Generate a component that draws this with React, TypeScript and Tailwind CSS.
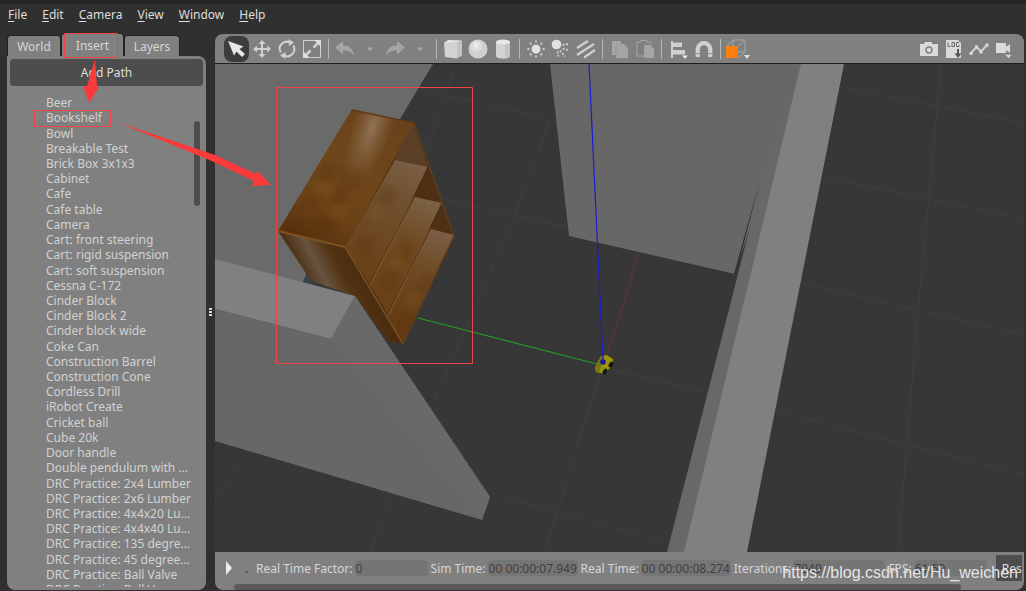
import React, { type ReactNode } from "react";

const MENUS = ["File", "Edit", "Camera", "View", "Window", "Help"];

const MODELS = [
  "Beer", "Bookshelf", "Bowl", "Breakable Test", "Brick Box 3x1x3", "Cabinet", "Cafe", "Cafe table",
  "Camera", "Cart: front steering", "Cart: rigid suspension", "Cart: soft suspension", "Cessna C-172",
  "Cinder Block", "Cinder Block 2", "Cinder block wide", "Coke Can", "Construction Barrel",
  "Construction Cone", "Cordless Drill", "iRobot Create", "Cricket ball", "Cube 20k", "Door handle",
  "Double pendulum with …", "DRC Practice: 2x4 Lumber", "DRC Practice: 2x6 Lumber",
  "DRC Practice: 4x4x20 Lu…", "DRC Practice: 4x4x40 Lu…", "DRC Practice: 135 degre…",
  "DRC Practice: 45 degree…", "DRC Practice: Ball Valve",
];

function Tool({ label, active, children }: { label: string; active?: boolean; children: ReactNode }) {
  return (
    <button
      type="button"
      aria-label={label}
      className={`flex h-[26px] w-[25px] shrink-0 items-center justify-center rounded-lg ${active ? "bg-[#3c3c3c]" : ""}`}
    >
      <svg viewBox="0 0 24 24" className="size-6 shrink-0" fill="none" stroke="#d0d0d0" strokeWidth="2">
        {children}
      </svg>
    </button>
  );
}

function Sep({ wide }: { wide?: boolean }) {
  return (
    <span className={`flex shrink-0 justify-center ${wide ? "w-[9px]" : "w-2"}`}>
      <span className="h-5 w-px bg-[#b8b8b8]" />
    </span>
  );
}

const SUN_RAYS = [0, 45, 90, 135, 180, 225, 270, 315];

function Toolbar() {
  return (
    <div className="flex h-[30px] shrink-0 items-center overflow-hidden border-b border-[#1e1e1e] bg-[#808080] pr-2 pl-[9px]">
      <Tool label="Selection mode" active>
        <path d="M3 4 L18.500 9.500 L14.500 12 L20 17 L17 20 L11.500 14.500 L9 18.500 Z" fill="#e6e6e6" stroke="none" />
      </Tool>
      <Tool label="Translation mode">
        <path d="M12 6V18M6 12H18" />
        <path d="M12 3l3.500 4h-7zM12 21l3.500-4h-7zM3 12l4-3.500v7zM21 12l-4-3.500v7z" fill="#d0d0d0" stroke="none" />
      </Tool>
      <Tool label="Rotation mode">
        <path d="M5.800 15.500A7 7 0 0 1 15 5.600M18.200 8.500A7 7 0 0 1 9 18.400" />
        <path d="M13.500 2l5.500 3.500-5 3.500zM10.500 15l-5.500 3.500 5.500 3.500z" fill="#d0d0d0" stroke="none" />
      </Tool>
      <Tool label="Scale mode">
        <path d="M3.500 3.500H20.500V20.500H3.500Z" strokeWidth="1" />
        <path d="M6 18L10.500 13.500M13.500 10.500L18 6" strokeWidth="2.500" />
        <path d="M21 3v7l-7-7zM3 21v-7l7 7z" fill="#dedede" stroke="none" />
      </Tool>
      <Sep />
      <Tool label="Undo">
        <path d="M2 10.500L10 4v4.500c6 0 10 3 11 10-3-4-6-5-11-5v4z" fill="#a5a5a5" stroke="none" />
      </Tool>
      <Tool label="Undo history">
        <path d="M9 10.500h6l-3 4z" fill="#a5a5a5" stroke="none" />
      </Tool>
      <Tool label="Redo">
        <path d="M22 10.500L14 4v4.500c-6 0-10 3-11 10 3-4 6-5 11-5v4z" fill="#a5a5a5" stroke="none" />
      </Tool>
      <Tool label="Redo history">
        <path d="M9 10.500h6l-3 4z" fill="#a5a5a5" stroke="none" />
      </Tool>
      <Sep />
      <Tool label="Box">
        <path d="M3 6l13-.5v16L4 20z" fill="#d2d2d2" stroke="none" />
        <path d="M3 6l4-3 14 .5-5 2z" fill="#e8e8e8" stroke="none" />
        <path d="M16 5.500l5-2v15l-5 3z" fill="#c2c2c2" stroke="none" />
      </Tool>
      <Tool label="Sphere">
        <circle cx="12" cy="12" r="9.500" fill="#cfcfcf" stroke="none" />
        <circle cx="10.500" cy="9" r="5.500" fill="#dedede" stroke="none" />
        <circle cx="10" cy="8" r="2.500" fill="#ececec" stroke="none" />
      </Tool>
      <Tool label="Cylinder">
        <path d="M5 5v14c0 3.500 14 3.500 14 0V5z" fill="#d4d4d4" stroke="none" />
        <path d="M14 5v16.500c3-.3 5-1.200 5-2.500V5z" fill="#c4c4c4" stroke="none" />
        <ellipse cx="12" cy="5" rx="7" ry="2.500" fill="#e8e8e8" stroke="none" />
      </Tool>
      <Sep />
      <Tool label="Point light">
        <circle cx="12" cy="12" r="4.500" fill="#e0e0e0" stroke="none" />
        {SUN_RAYS.map((a) => (
          <path key={a} d="M12 3.400v2" transform={`rotate(${a} 12 12)`} strokeWidth="1.800" />
        ))}
      </Tool>
      <Tool label="Spot light">
        <circle cx="7.500" cy="7.500" r="4.800" fill="#e0e0e0" stroke="none" />
        <path d="M13.500 8l7-1M13.500 11.500l7 2M11 13.500l5 6M8.500 14.500l1 5" strokeWidth="1.800" strokeDasharray="2 1.500" />
      </Tool>
      <Tool label="Directional light">
        <path d="M3 11L14 4M3 18L20 7M10 20.500L21 13" strokeWidth="2.200" />
      </Tool>
      <Sep wide />
      <Tool label="Copy">
        <path d="M4 4h9v3h3l4 4v10H8v-3H4z" fill="#a5a5a5" stroke="none" />
        <path d="M8 8v9" stroke="#949494" strokeWidth="1" />
      </Tool>
      <Tool label="Paste">
        <path d="M4 5h4V3.500h6V5h4v14H4z" stroke="#a5a5a5" strokeWidth="1" />
        <path d="M11 8h6l4 4v9H11z" fill="#a5a5a5" stroke="none" />
      </Tool>
      <Sep wide />
      <Tool label="Align">
        <path d="M5 4v17" />
        <path d="M6 5.500h9v4.500H6zM6 13h12v4.500H6z" fill="#d0d0d0" stroke="none" />
        <path d="M15 18.500h6l-3 3.500z" fill="#e6e6e6" stroke="none" />
      </Tool>
      <Tool label="Snap">
        <path d="M5.700 20v-7.500a6.300 6.300 0 0 1 12.600 0V20" strokeWidth="4.200" />
        <path d="M3.500 16.500h4.500M16 16.500h4.500" stroke="#909090" strokeWidth="1" />
      </Tool>
      <Sep wide />
      <button type="button" aria-label="View angle" className="flex h-[26px] w-[25px] shrink-0 items-center justify-center">
        <svg viewBox="1 0 26 24" className="h-6 w-[26px] shrink-0" fill="none">
          <path d="M3 9L9 3h12v12l-6 6M15 9l6-6M9 3v6M9 15h12" stroke="#a5abb0" strokeWidth="1" />
          <path d="M2 9h12v12H2z" fill="#ff7f0e" />
          <path d="M20 18h6l-3 4z" fill="#dedede" />
        </svg>
      </button>
      <div className="flex-1" />
      <Tool label="Screenshot">
        <path d="M3 7h4l1-2h7v2h6v12H3z" fill="#dadada" stroke="none" />
        <circle cx="12" cy="13" r="3" stroke="#808080" strokeWidth="1.500" />
      </Tool>
      <Tool label="Log data">
        <path d="M4 3h12l3 3v15H4z" fill="#dadada" stroke="none" />
        <path d="M6 5.500v4h2.500M10 5.500h2.500v4H10zM17 5.500h-2.500v4H17v-2" stroke="#6a6a6a" strokeWidth="1" />
        <path d="M16 12v6" stroke="#555" strokeWidth="2" />
        <path d="M12.500 16.500h7L16 21z" fill="#555" stroke="none" />
      </Tool>
      <Tool label="Plot">
        <path d="M4 16l5.500-6 4.500 4.500L20 8" />
        <path d="M2.500 15h3v3h-3zM8 8.500h3v3H8zM12.500 13.500h3v3h-3zM18.500 6.500h3v3h-3z" fill="#dadada" stroke="none" />
      </Tool>
      <Tool label="Record video">
        <path d="M4 6h10v4L18 7v9l-4-3V16H4z" fill="#dadada" stroke="none" />
        <path d="M13 17.500h7l-3.500 4z" fill="#dadada" stroke="#808080" strokeWidth=".5" />
      </Tool>
    </div>
  );
}

function Bookshelf() {
  return (
    <g>
      <path d="M307 272L303 282L314 285Z" fill="#36444c" />
      <path d="M345 247L413 123L454 236L403 344Z" fill="#4e3115" />
      <path d="M413 123L428 167L395 160L399 148Z" fill="#5a3f26" />
      <path d="M395 160L428 167L371 286L345 247Z" fill="url(#plankA)" />
      <path d="M415 197L442 203L389 316L370 285Z" fill="url(#plankB)" />
      <path d="M431 229L454 235L403 344L388 316Z" fill="url(#plankC)" />
      <path d="M352 109L414 123L345 247L278 231Z" fill="url(#woodSide)" />
      <path d="M352 109L414 123L345 247L278 231Z" fill="url(#shine)" />
      <path d="M278 231L345 247L403 344L388 341L355 296L311 281Z" fill="url(#woodTop)" />
      <g filter="url(#soften)">
        <g fill="#4a2404" opacity=".2">
          <path d="M322 163l18 4-8 15-18-4zM349 167l17 4-8 15-17-4zM309 191l15 3-9 16-12-3zM337 186l13 3-9 17-13-3zM319 213l22 5-9 18-20-5zM290 222l18 4-4 8-18-4z" />
          <path d="M384 186l13 5-9 17-13-5zM362 235l12 5-6 15-10-4zM404 242l11 4-8 17-12-5zM390 268l12 5-9 17-13-5zM424 275l9 4-8 16-10-4zM404 309l11 4-8 16-9-4z" />
        </g>
        <g fill="#b07830" opacity=".09">
          <path d="M318 180l18 4-9 15-17-3zM333 203l17 4-9 14-16-3zM375 203l12 5-9 16-12-5zM399 250l9 4-9 16-10-5zM411 290l10 5-8 13-9-4z" />
        </g>
      </g>
      <path d="M415 197L370 285M431 229L388 316" stroke="#8a6a48" strokeWidth="1" opacity=".7" />
      <path d="M428 167L413 198M442 203L429 230" stroke="#4a2d12" strokeWidth="1" />
      <path d="M414 198L369 284M430 230L387 315" stroke="#53320f" strokeWidth="1" opacity=".8" />
      <path d="M345 247L403 344" stroke="#775026" strokeWidth="1.500" />
      <path d="M278 231L345 247" stroke="#805222" strokeWidth="2" fill="none" />
      <path d="M345 247L413 123" stroke="#6e4216" strokeWidth="1" fill="none" />
      <path d="M352 110L414 123L454 236L403 344" stroke="#5e3d1c" strokeWidth="1.500" fill="none" />
    </g>
  );
}

function Scene() {
  return (
    <svg
      viewBox="215 64 809 488"
      preserveAspectRatio="xMidYMid slice"
      className="min-h-0 w-full flex-1 bg-[#373737]"
      role="img"
      aria-label="Simulation view"
    >
      <defs>
        <filter id="soften"><feGaussianBlur stdDeviation="2.500" /></filter>
        <linearGradient id="woodSide" gradientUnits="userSpaceOnUse" x1="383" y1="114" x2="312" y2="242">
          <stop offset="0" stopColor="#6a431c" />
          <stop offset=".4" stopColor="#6e461a" />
          <stop offset=".75" stopColor="#6c4317" />
          <stop offset="1" stopColor="#5a320d" />
        </linearGradient>
        <radialGradient id="shine" gradientUnits="userSpaceOnUse" cx="0" cy="0" r="1" gradientTransform="translate(372 128) rotate(110) scale(60 20)">
          <stop offset="0" stopColor="#a8927c" stopOpacity=".6" />
          <stop offset=".5" stopColor="#a8927c" stopOpacity=".25" />
          <stop offset="1" stopColor="#a8927c" stopOpacity="0" />
        </radialGradient>
        <linearGradient id="woodTop" gradientUnits="userSpaceOnUse" x1="292" y1="262" x2="345" y2="235">
          <stop offset="0" stopColor="#47280c" />
          <stop offset=".35" stopColor="#685440" />
          <stop offset=".65" stopColor="#523414" />
          <stop offset="1" stopColor="#4a2b0d" />
        </linearGradient>
        <linearGradient id="plankA" gradientUnits="userSpaceOnUse" x1="415" y1="160" x2="360" y2="275">
          <stop offset="0" stopColor="#7b6046" />
          <stop offset=".35" stopColor="#70502e" />
          <stop offset="1" stopColor="#694016" />
        </linearGradient>
        <linearGradient id="plankB" gradientUnits="userSpaceOnUse" x1="430" y1="197" x2="380" y2="305">
          <stop offset="0" stopColor="#7d634a" />
          <stop offset=".4" stopColor="#6f4b22" />
          <stop offset="1" stopColor="#694016" />
        </linearGradient>
        <linearGradient id="plankC" gradientUnits="userSpaceOnUse" x1="443" y1="230" x2="398" y2="335">
          <stop offset="0" stopColor="#7b6047" />
          <stop offset=".4" stopColor="#6e4a22" />
          <stop offset="1" stopColor="#633a12" />
        </linearGradient>
      </defs>
      <g stroke="#3f3f3f" strokeWidth="1" fill="none">
        <path d="M422 90L550 119M443 199L569 228M458 64L443 97L400 240M550 119L513 220L458 347L391 497L370 552M600 375L573 460L545 552" />
        <path d="M613 370L706 392M490 493L668 543M243 457L215 503" />
        <path d="M844 88L1025 123M823 177L1025 219M801 283L1025 335M776 411L1025 475M941 64L929 198L918 310L898 552" />
      </g>
      <path d="M215 64H433L400 119L307 273L303 283L215 262Z" fill="#6a6a6a" />
      <path d="M550 64H803L735 274L569 236Z" fill="#676767" />
      <path d="M801 64L762 180L667 552H685L802 100Z" fill="#686868" />
      <path d="M760 180L734 274H736Z" fill="#303030" />
      <path d="M801 64H844L747 552H684Z" fill="#808080" />
      <path d="M418 318L597 364" stroke="#259a25" strokeWidth="1.200" />
      <path d="M639 254L605 360" stroke="#683434" strokeWidth="1" />
      <Bookshelf />
      <path d="M215 309L331 339L355 296L490 497L482 520L215 441Z" fill="#676767" />
      <path d="M331 339L355 296L490 497L482 520Z" fill="#696969" />
      <path d="M215 259L355 296L331 339L215 309Z" fill="#808080" />
      <path d="M595 367L601 356L607 355L613 359L613 364L605 374L596 372Z" fill="#99960a" />
      <path d="M595 367L601 356L604 356L599 373L596 372Z" fill="#77750e" />
      <ellipse cx="605" cy="371.500" rx="2" ry="3.200" transform="rotate(35 605 371.500)" fill="#161616" />
      <ellipse cx="611" cy="364.500" rx="2" ry="3.200" transform="rotate(35 611 364.500)" fill="#161616" />
      <path d="M589 64L603 361" stroke="#1c1ccc" strokeWidth="1.200" />
      <circle cx="603" cy="362" r="2.800" fill="#1818a0" />
    </svg>
  );
}

function Field({ id, label, value, size }: { id: string; label: string; value: string; size: string }) {
  return (
    <div className="flex shrink-0 items-center gap-0.5">
      <label htmlFor={id} className="text-[#d6d6d6]">{label}</label>
      <input id={id} readOnly defaultValue={value} className={`h-4 rounded-sm bg-[#757575] px-px text-[#3f3f3f] outline-none ${size}`} />
    </div>
  );
}

function StatusBar() {
  return (
    <div className="flex h-[38px] shrink-0 flex-col overflow-hidden bg-[#808080]">
      <div className="mr-0.5 flex h-8 shrink-0 items-center gap-[3px] overflow-hidden pl-[11px] whitespace-nowrap">
        <button type="button" aria-label="Play" className="shrink-0">
          <svg viewBox="0 0 6 14" className="h-3.5 w-1.5"><path d="M0 0L6 7L0 14Z" fill="#eee" /></svg>
        </button>
        <span className="w-[18px] shrink-0 pl-2.5 font-bold text-[#444]">.</span>
        <Field id="rtf" label="Real Time Factor:" value="0" size="w-[73px]" />
        <Field id="sim" label="Sim Time:" value="00 00:00:07.949" size="w-[90px]" />
        <Field id="real" label="Real Time:" value="00 00:00:08.274" size="w-[90px]" />
        <Field id="iter" label="Iterations:" value="7949" size="w-[92px]" />
        <Field id="fps" label="FPS:" value="61.50" size="w-[73px]" />
        <button type="button" className="ml-1.5 h-[26px] shrink-0 bg-[#4d4d4d] px-1.5 text-[#dedede]">Reset Time</button>
      </div>
      <div className="flex h-1.5 shrink-0 pl-[19px]">
        <div className="w-[92%] rounded-full bg-[#5a5a5a]" />
        <div className="w-[8%]" />
      </div>
    </div>
  );
}

function Sidebar() {
  const tab = "rounded-t border border-b-0 border-[#222] bg-[#808080] text-[#d6d6d6]";
  return (
    <aside className="flex w-[199px] shrink-0 flex-col">
      <div role="tablist" className="flex h-[23px] shrink-0 items-end">
        <button type="button" role="tab" className={`h-[21px] w-[54px] ${tab}`}>World</button>
        <button type="button" role="tab" aria-selected className={`h-[23px] w-[63px] ${tab}`}>Insert</button>
        <button type="button" role="tab" className={`h-[21px] w-[56px] ${tab}`}>Layers</button>
      </div>
      <div className="flex min-h-0 flex-1 flex-col rounded-lg rounded-tl-none bg-[#808080] p-[3px]">
        <button type="button" className="h-[27px] shrink-0 rounded-sm bg-[#4d4d4d] text-[#dedede]">Add Path</button>
        <div className="flex min-h-0 flex-1 overflow-hidden pt-[9px]">
          <div className="flex min-w-0 flex-1 flex-col pl-9 whitespace-nowrap text-[#d2d2d2]">
            <ul className="flex min-h-0 flex-1 flex-col">
              {MODELS.map((m) => (
                <li key={m} className="flex min-h-0 flex-1 items-center">{m}</li>
              ))}
            </ul>
            <div className="h-[5px] shrink-0 overflow-hidden leading-[15px]">DRC Practice: Ball V…</div>
          </div>
          <div className="w-[9px] shrink-0 pt-[26px]">
            <div className="h-[85px] w-1.5 rounded-full bg-[#4d4d4d]" />
          </div>
        </div>
      </div>
    </aside>
  );
}

function Annotations() {
  return (
    <svg viewBox="0 0 1026 591" className="pointer-events-none absolute top-0 left-0 h-[591px] w-[1026px]" fill="none" stroke="#f04444" aria-hidden="true">
      <path d="M64.500 33.500h53v24h-53zM34.500 110.500h76v16h-76zM276.500 87.500h196v276h-196z" />
      <path d="M95 59L97 87L99 87L89 103L83 86L87 86ZM117 122L215 155L256 174L258 171L271 185L252 186L254 181L214 162Z" fill="#fb3a3a" stroke="none" />
    </svg>
  );
}

export default function App() {
  return (
    <div className="relative flex h-screen min-h-[400px] flex-col overflow-hidden bg-[#303030] font-['Noto_Sans',sans-serif] text-[12px] leading-[15px]">
      <div className="h-1 shrink-0 bg-[#262626]" />
      <nav className="flex h-5 shrink-0 items-center gap-[15px] pl-2 text-[#dedede]">
        {MENUS.map((m) => (
          <button key={m} type="button">
            <span className="underline underline-offset-2">{m[0]}</span>{m.slice(1)}
          </button>
        ))}
      </nav>
      <div className="flex min-h-0 flex-1 pt-[9px] pr-0.5 pb-px pl-[7px]">
        <Sidebar />
        <div className="flex w-[9px] shrink-0 items-center justify-center">
          <div className="flex flex-col gap-px">
            <i className="h-0.5 w-[3px] bg-[#d6d6d6]" />
            <i className="h-0.5 w-[3px] bg-[#d6d6d6]" />
            <i className="h-0.5 w-[3px] bg-[#d6d6d6]" />
          </div>
        </div>
        <main className="mt-px flex min-w-0 flex-1 flex-col overflow-hidden rounded-lg">
          <Toolbar />
          <Scene />
          <StatusBar />
        </main>
      </div>
      <Annotations />
      <div className="absolute right-2 bottom-2 font-['Liberation_Sans',sans-serif] text-[16px] leading-5 text-[#e6e6e6]">
        https://blog.csdn.net/Hu_weichen
      </div>
    </div>
  );
}
